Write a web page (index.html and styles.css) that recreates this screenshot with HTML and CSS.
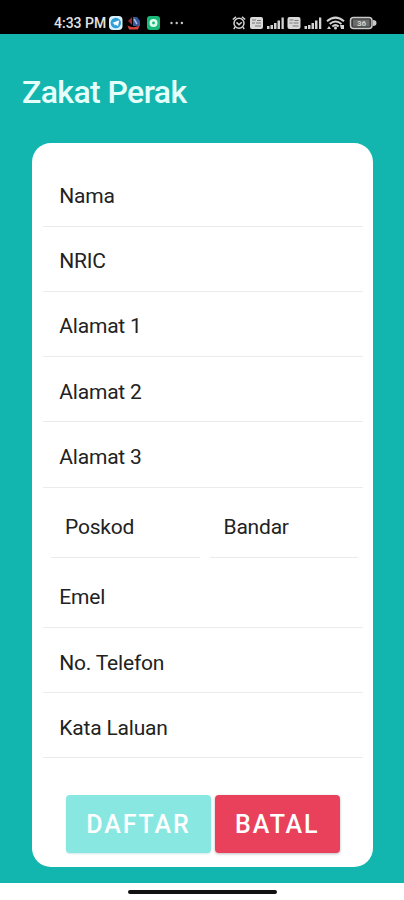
FILE: index.html
```
<!DOCTYPE html>
<html lang="ms">
<head>
<meta charset="utf-8">
<title>Zakat Perak</title>
<link rel="stylesheet" href="styles.css">
</head>
<body>
<header class="status">
  <span class="time">4:33 PM</span>
  <svg class="apps" width="76" height="14" viewBox="0 0 76 14">
    <rect x="1" y="0" width="13.5" height="14" rx="4" fill="#d9f1fb"/>
    <circle cx="7.8" cy="7" r="5.2" fill="#2f9fd8"/>
    <path d="M4.2 7 11.2 4.2 10 10.2 7.7 8.6 6.6 9.7 6.2 7.8Z" fill="#fff"/>
    <path d="M20 5 24 1 24 9Z" fill="#9c2b35"/>
    <path d="M25 1h4l3 4v5h-7z" fill="#34579b"/>
    <path d="M26 3l3 5" stroke="#a9b9df" stroke-width="1.5"/>
    <path d="M19.5 9.5Q25 13 31.5 9.5L30 13.5H21Z" fill="#d84343"/>
    <rect x="39" y="0" width="13" height="14" rx="3" fill="#19b878"/>
    <circle cx="45.5" cy="7" r="4" fill="#dcfff0"/>
    <circle cx="45.5" cy="7" r="1.4" fill="#19b878"/>
    <g fill="#c4c4c4"><circle cx="63.5" cy="7" r="1.2"/><circle cx="68.7" cy="7" r="1.2"/><circle cx="73.9" cy="7" r="1.2"/></g>
  </svg>
  <svg class="system" width="145" height="14" viewBox="0 0 145 14">
    <g fill="none" stroke="#d2d2d2" stroke-width="1.5">
      <circle cx="7" cy="7.3" r="5"/>
      <path d="M.8 3.5 4 .9M13.2 3.5 10 .9M3 11.2 1.8 13M11 11.2 12.2 13M4.5 6.4 7 8.7 9.8 6.2"/>
    </g>
    <g id="sim">
      <rect x="18" y="1" width="13" height="12" rx="2" fill="#dadada"/>
      <path d="M20 4h4M20 7h3M25 4.5h4M24 7h5M23 10h6" stroke="#777" stroke-width="1.2"/>
    </g>
    <g id="signal" fill="#d2d2d2">
      <path d="M35 10h2.5v3h-2.5zM38.5 9h2.5v4h-2.5zM42 7h2.5v6h-2.5zM45.5 4.5h2.5v8.5h-2.5z"/>
      <path d="M49.5 1.5h2.3V13h-2.3z"/>
    </g>
    <use href="#sim" x="37.5"/>
    <use href="#signal" x="37.5"/>
    <g fill="none" stroke="#d2d2d2" stroke-width="2">
      <path d="M95 5.2Q103.5-2 112 5.2M97.7 8Q103.5 3 109.5 8M100.3 10.5Q103.5 7.8 106.7 10.5"/>
    </g>
    <circle cx="103.5" cy="12" r="1.5" fill="#d2d2d2"/>
    <path d="M95 13l2-3 2 3zM108 9h4v4h-3z" fill="#d2d2d2"/>
    <rect x="118.5" y="1.5" width="21.5" height="11" rx="3" fill="#3b3b3b" stroke="#c9c9c9" stroke-width="1.5"/>
    <rect x="121" y="3.5" width="16.5" height="7" fill="#6a6a6a"/>
    <path d="M141 4Q144.5 4 144.5 7T141 10Z" fill="#c9c9c9"/>
    <text class="level" x="129.5" y="10.2" text-anchor="middle">36</text>
  </svg>
</header>
<main class="page">
  <h1 class="title">Zakat Perak</h1>
  <form class="card">
    <div class="field">Nama</div>
    <div class="field">NRIC</div>
    <div class="field">Alamat 1</div>
    <div class="field">Alamat 2</div>
    <div class="field">Alamat 3</div>
    <div class="pair">
      <div class="field">Poskod</div>
      <div class="field">Bandar</div>
    </div>
    <div class="field">Emel</div>
    <div class="field">No. Telefon</div>
    <div class="field">Kata Laluan</div>
    <div class="actions">
      <button type="button" class="btn register">DAFTAR</button>
      <button type="button" class="btn cancel">BATAL</button>
    </div>
  </form>
</main>
<footer class="nav"><div class="handle"></div></footer>
</body>
</html>
```
FILE: styles.css
```
* { box-sizing: border-box; }
body {
  margin: 0;
  width: 404px;
  height: 900px;
  display: flex;
  flex-direction: column;
  overflow: hidden;
  background: #fff;
  font-family: Roboto, sans-serif;
}
.status {
  height: 34px;
  flex: none;
  display: flex;
  align-items: flex-start;
  padding: 16px 27px 0 54px;
  background: #000;
}
.time {
  width: 54px;
  font-size: 14px;
  line-height: 15px;
  font-weight: 500;
  white-space: nowrap;
  color: #e2e2e2;
}
.status svg { display: block; flex: none; }
.system { margin-left: auto; }
.level { font-size: 8px; font-weight: 700; fill: #d0d0d0; }
.page {
  height: 849px;
  flex: none;
  padding: 0 31px 0 32px;
  background: #12b6af;
}
.title {
  height: 108.6px;
  margin: 0 0 0 -10px;
  padding-top: 38px;
  font-size: 32px;
  line-height: 40px;
  font-weight: 500;
  letter-spacing: -0.6px;
  color: #e5fffb;
}
.card {
  height: 724.4px;
  padding: 19px 10px 0 11px;
  border-radius: 19px;
  background: #fff;
}
.field {
  height: 65.2px;
  padding: 22.4px 16px 0 16.3px;
  border-bottom: 1px solid #eaebed;
  font-size: 21px;
  line-height: 25px;
  letter-spacing: -0.2px;
  color: #222;
}
.pair {
  display: grid;
  grid-template-columns: 1fr 1fr;
  gap: 10px;
  padding: 5px 5px 5px 8px;
  margin-bottom: -5px;
}
.pair + .field { height: 70.4px; padding-top: 27.6px; }
.pair .field { padding: 22.2px 14px 0; }
.actions {
  display: flex;
  gap: 4px;
  padding: 36.2px 0 0 23px;
}
.btn {
  height: 58px;
  padding: 1px 0 0;
  border: 0;
  border-radius: 4px;
  font: 500 25px/57px Roboto, sans-serif;
  letter-spacing: 1.9px;
  color: #fff;
}
.register { width: 145px; background: #88e7e1; box-shadow: 0 1px 2px #cfe9e7; }
.cancel { width: 124.5px; background: #e9415b; box-shadow: 0 1px 3px #bbb; }
.nav {
  flex: 1;
  padding: 7px 0 0 128px;
}
.handle { width: 149px; height: 4px; border-radius: 2px; background: #111; }
```
